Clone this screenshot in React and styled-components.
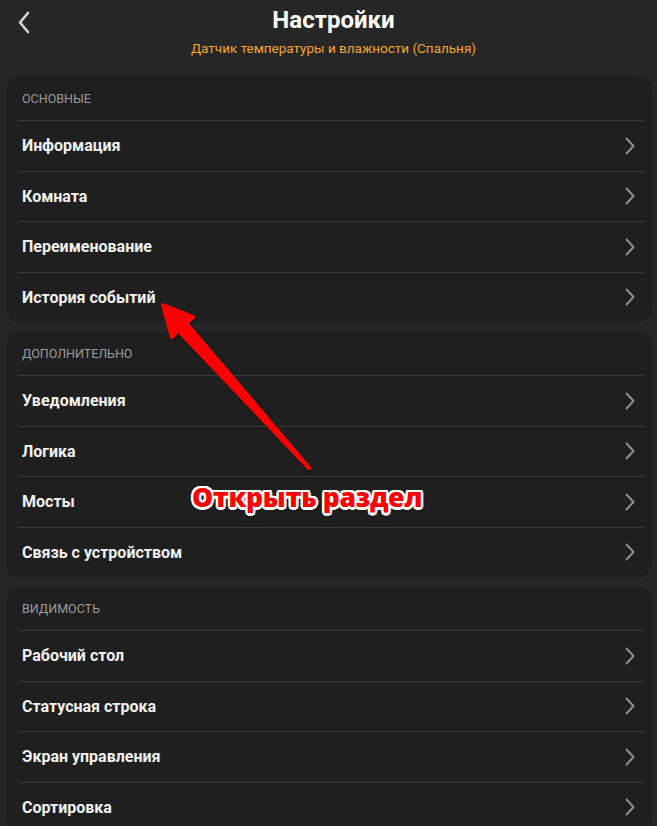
import React from "react";
import styled, { createGlobalStyle } from "styled-components";

const GlobalStyle = createGlobalStyle`
  html, body {
    margin: 0;
    padding: 0;
    background: #262626;
  }
  body {
    font-family: Roboto, "Noto Sans", sans-serif;
    color: #f2f2f2;
  }
`;

const Page = styled.div`
  position: relative;
  width: 657px;
  min-height: 826px;
  padding: 0 5px 0 6px;
  box-sizing: border-box;
  overflow: hidden;
`;

const Header = styled.header`
  position: relative;
  height: 77px;
  padding-left: 9px;
  display: flex;
  flex-direction: column;
  align-items: center;
`;

const BackButton = styled.button`
  position: absolute;
  left: 7px;
  top: 10px;
  width: 26px;
  height: 26px;
  padding: 0;
  border: none;
  background: none;
  cursor: pointer;
`;

const Title = styled.h1`
  margin: 5px 0 0;
  font-size: 24px;
  font-weight: 700;
  line-height: 30px;
  color: #ffffff;
`;

const Subtitle = styled.div`
  margin-top: 5px;
  font-size: 13.5px;
  line-height: 16px;
  color: #f4a52a;
`;

const Sections = styled.div`
  display: flex;
  flex-direction: column;
  gap: 10px;
`;

const Card = styled.section`
  background: #1f1f1f;
  border-radius: 13px;
  padding: 0 8px 0 12px;
`;

const Label = styled.div`
  height: 43px;
  display: flex;
  align-items: center;
  padding-left: 4px;
  font-size: 12.5px;
  color: #9b9b9b;
  text-transform: uppercase;
  box-sizing: border-box;
`;

const Row = styled.div`
  height: 50.5px;
  box-sizing: border-box;
  border-top: 1px solid #3b3b3b;
  display: flex;
  align-items: center;
  justify-content: space-between;
  padding: 0 8px 0 4px;
  cursor: pointer;
`;

const RowText = styled.span`
  font-size: 16px;
  font-weight: 700;
  color: #f2f2f2;
`;

const Overlay = styled.svg`
  position: absolute;
  left: 0;
  top: 0;
  pointer-events: none;
`;

const Callout = styled.div`
  position: absolute;
  left: 192px;
  top: 479px;
  font-family: "Open Sans", "Noto Sans", sans-serif;
  font-size: 26.5px;
  font-weight: 800;
  line-height: 36px;
  color: #ff0000;
  letter-spacing: -0.3px;
  text-shadow:
    2.5px 0 0 #fff, -2.5px 0 0 #fff, 0 2.5px 0 #fff, 0 -2.5px 0 #fff,
    1.8px 1.8px 0 #fff, -1.8px 1.8px 0 #fff, 1.8px -1.8px 0 #fff, -1.8px -1.8px 0 #fff,
    2px 3px 4px rgba(0, 0, 0, 0.5);
  white-space: nowrap;
`;

const Chevron = () => (
  <svg width="12" height="18" viewBox="0 0 12 18">
    <path d="M2.5 1.5 L9.5 9 L2.5 16.5" fill="none" stroke="#8f8f8f" strokeWidth="2" strokeLinecap="round" strokeLinejoin="round" />
  </svg>
);

const sections = [
  { title: "Основные", items: ["Информация", "Комната", "Переименование", "История событий"] },
  { title: "Дополнительно", items: ["Уведомления", "Логика", "Мосты", "Связь с устройством"] },
  { title: "Видимость", items: ["Рабочий стол", "Статусная строка", "Экран управления", "Сортировка"] },
];

export default function App() {
  return (
    <>
      <GlobalStyle />
      <Page>
        <Header>
          <BackButton aria-label="Назад">
            <svg width="26" height="26" viewBox="0 0 26 26">
              <path d="M15 3 L7 12.5 L15 22" fill="none" stroke="#d6d6d6" strokeWidth="2.6" strokeLinecap="round" strokeLinejoin="round" />
            </svg>
          </BackButton>
          <Title>Настройки</Title>
          <Subtitle>Датчик температуры и влажности (Спальня)</Subtitle>
        </Header>
        <Sections>
          {sections.map((s) => (
            <Card key={s.title}>
              <Label>{s.title}</Label>
              {s.items.map((item) => (
                <Row key={item}>
                  <RowText>{item}</RowText>
                  <Chevron />
                </Row>
              ))}
            </Card>
          ))}
        </Sections>

        <Overlay width="657" height="826" viewBox="0 0 657 826">
          <defs>
            <filter id="shadow" x="-20%" y="-20%" width="140%" height="140%">
              <feDropShadow dx="1.5" dy="2" stdDeviation="1.5" floodColor="#000" floodOpacity="0.45" />
            </filter>
          </defs>
          <path
            d="M163 305 L193 317 L186 323 L309 468 L178 330 L172 337 Z"
            fill="#ff0000"
            stroke="#ff0000"
            strokeWidth="4"
            strokeLinejoin="round"
            filter="url(#shadow)"
          />
        </Overlay>
        <Callout>Открыть раздел</Callout>
      </Page>
    </>
  );
}
